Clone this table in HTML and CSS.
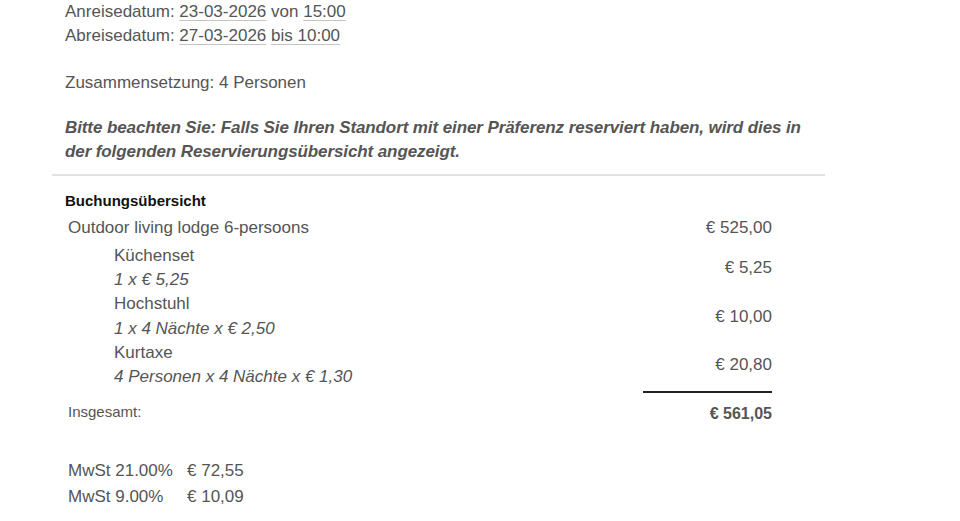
FILE: index.html
```html
<!DOCTYPE html>
<html lang="de">
<head>
<meta charset="utf-8">
<link rel="stylesheet" href="styles.css">
</head>
<body>
<div class="page">
  <div class="intro">
    <p class="dates">Anreisedatum: <span class="u">23-03-2026</span> von <span class="u">15:00</span><br>Abreisedatum: <span class="u">27-03-2026</span> <span class="u">bis 10:00</span></p>
    <p class="comp">Zusammensetzung: 4 Personen</p>
    <p class="note">Bitte beachten Sie: Falls Sie Ihren Standort mit einer Präferenz reserviert haben, wird dies in der folgenden Reservierungsübersicht angezeigt.</p>
  </div>
  <hr class="rule">
  <div class="summary">
    <h3 class="title">Buchungsübersicht</h3>
    <div class="row main">
      <span class="label">Outdoor living lodge 6-persoons</span>
      <span class="price">€ 525,00</span>
    </div>
    <div class="subs">
      <div class="row sub">
        <div class="label"><div>Küchenset</div><div class="calc">1 x € 5,25</div></div>
        <span class="price">€ 5,25</span>
      </div>
      <div class="row sub">
        <div class="label"><div>Hochstuhl</div><div class="calc">1 x 4 Nächte x € 2,50</div></div>
        <span class="price">€ 10,00</span>
      </div>
      <div class="row sub">
        <div class="label"><div>Kurtaxe</div><div class="calc">4 Personen x 4 Nächte x € 1,30</div></div>
        <span class="price">€ 20,80</span>
      </div>
    </div>
    <div class="total-line"><span></span></div>
    <div class="row total">
      <span class="label">Insgesamt:</span>
      <span class="price">€ 561,05</span>
    </div>
    <div class="vat">
      <span>MwSt 21.00%</span><span>€ 72,55</span>
      <span>MwSt 9.00%</span><span>€ 10,09</span>
    </div>
  </div>
</div>
</body>
</html>
```

FILE: styles.css
```css
html, body {
  margin: 0;
  padding: 0;
  background: #fff;
}
body {
  font-family: "Liberation Sans", Arial, sans-serif;
  color: #555;
  font-size: 17px;
}
.page {
  width: 960px;
}
.intro {
  padding: 0 0 0 65px;
  line-height: 23.5px;
}
.intro p {
  margin: 0;
}
.dates {
  margin-bottom: 23.5px !important;
}
.u {
  text-decoration: underline;
  text-decoration-color: #c4c4c4;
  text-underline-offset: 3px;
}
.note {
  margin-top: 22px !important;
  font-weight: bold;
  font-style: italic;
  width: 760px;
  letter-spacing: -0.1px;
}
.rule {
  margin: 11px 0 0 52px;
  width: 773px;
  border: 0;
  height: 2px;
  background: #e2e2e2;
}
.summary {
  padding-left: 65px;
  width: 707px;
}
.title {
  margin: 15px 0 0;
  font-size: 15px;
  color: #111;
  font-weight: bold;
  line-height: 20px;
}
.row {
  display: flex;
  justify-content: space-between;
  align-items: center;
  padding-left: 3px;
}
.main {
  margin-top: 5px;
  line-height: 24px;
}
.subs {
  margin-top: 4px;
}
.sub {
  padding-left: 49px;
  line-height: 24.2px;
}
.calc {
  font-style: italic;
}
.total-line {
  display: flex;
  justify-content: flex-end;
  margin-top: 2px;
}
.total-line span {
  width: 129px;
  height: 2px;
  background: #222;
}
.total {
  margin-top: 7px;
  font-size: 15px;
  line-height: 24px;
  align-items: baseline;
}
.total .price {
  font-weight: bold;
  font-size: 16px;
  position: relative;
  top: 2px;
}
.vat {
  margin-top: 34px;
  padding-left: 3px;
  display: grid;
  grid-template-columns: 119px auto;
  justify-content: start;
  line-height: 26px;
}
```
